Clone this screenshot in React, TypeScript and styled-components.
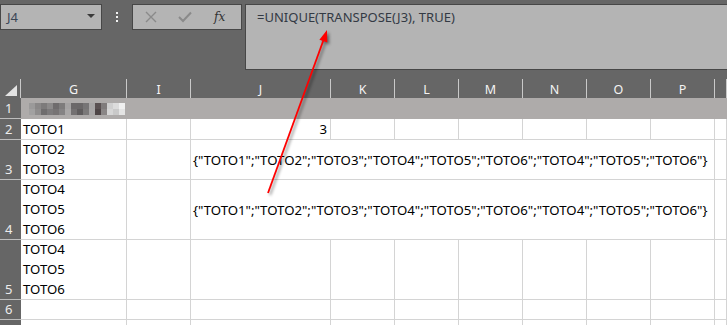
import React from "react";
import styled, { createGlobalStyle } from "styled-components";

const GlobalStyle = createGlobalStyle`
  html, body { margin: 0; padding: 0; background: #ffffff; overflow: hidden; }
  * { box-sizing: border-box; }
`;

const Window = styled.div`
  position: relative;
  width: 727px;
  height: 325px;
  overflow: hidden;
  background: #666666;
  font-family: "Noto Sans", "Open Sans", Arial, sans-serif;
`;

const TopBar = styled.div`
  display: flex;
  align-items: flex-start;
  height: 79px;
  padding-top: 4px;
`;

const NameBox = styled.div`
  width: 102px;
  height: 26px;
  background: #b4b4b4;
  border: 1px solid #474747;
  display: flex;
  align-items: center;
  justify-content: space-between;
  padding: 0 6px 0 6px;
  font-size: 13px;
  color: #3a4656;
`;

const DropArrow = styled.span`
  width: 0;
  height: 0;
  border-left: 4px solid transparent;
  border-right: 4px solid transparent;
  border-top: 4px solid #3a3a3a;
  margin-top: -2px;
`;

const Grip = styled.div`
  width: 30px;
  height: 26px;
  display: flex;
  flex-direction: column;
  align-items: center;
  justify-content: center;
  gap: 2px;
`;

const GripDot = styled.span`
  width: 2px;
  height: 2px;
  background: #f2f2f2;
`;

const FxBox = styled.div`
  width: 110px;
  height: 26px;
  background: #b4b4b4;
  border: 1px solid #474747;
  display: flex;
  align-items: center;
  padding-left: 12px;
  gap: 21px;
`;

const FxLabel = styled.span`
  font-family: "DejaVu Serif", "Liberation Serif", serif;
  font-style: italic;
  font-size: 12px;
  color: #333333;
  margin-left: 1px;
`;

const FormulaBar = styled.div`
  flex: 1;
  margin-left: 3px;
  margin-right: -6px;
  height: 66px;
  background: #b4b4b4;
  border: 1px solid #474747;
  padding: 3px 0 0 11px;
  font-size: 13px;
  color: #333a44;
`;

const Sheet = styled.div`
  display: grid;
  grid-template-columns: 21px 106px 64px 140px 64px 64px 64px 64px 64px 64px 1fr;
  grid-template-rows: 19px 21px 21px 40px 60px 60px 20px 20px;
  font-size: 13.2px;
`;

const ColHead = styled.div`
  background: #666666;
  border-right: 1px solid #c9c9c9;
  color: #f4f4f4;
  font-size: 12.5px;
  display: flex;
  align-items: center;
  justify-content: center;
  padding-top: 1px;
`;

const Corner = styled.div`
  background: #666666;
  border-right: 1px solid #c9c9c9;
  display: flex;
  align-items: flex-end;
  justify-content: flex-end;
  padding: 0 3px 2px 0;
`;

const CornerTriangle = styled.span`
  width: 0;
  height: 0;
  border-left: 12px solid transparent;
  border-bottom: 11px solid #e3e3e3;
`;

const RowHead = styled.div`
  background: #666666;
  border-bottom: 1px solid #bdbdbd;
  color: #ededed;
  font-size: 13px;
  display: flex;
  align-items: flex-end;
  padding: 0 0 1px 5px;
  line-height: 18px;
`;

const BandCell = styled.div`
  background: #aeabaa;
  display: flex;
  align-items: center;
  padding-left: 8px;
`;

const Cell = styled.div<{ $span?: number; $align?: "left" | "right"; $valign?: "end" | "center" }>`
  background: #ffffff;
  border-right: 1px solid #d4d4d4;
  border-bottom: 1px solid #d4d4d4;
  grid-column: span ${(p) => p.$span ?? 1};
  display: flex;
  flex-direction: column;
  justify-content: ${(p) => (p.$valign === "center" ? "center" : "flex-end")};
  align-items: ${(p) => (p.$align === "right" ? "flex-end" : "flex-start")};
  padding: 0 3px 0 2px;
  color: #000000;
  white-space: nowrap;
  overflow: hidden;
`;

const Line = styled.div`
  line-height: 20px;
  height: 20px;
`;

const ArrowLayer = styled.svg`
  position: absolute;
  left: 0;
  top: 0;
  pointer-events: none;
  filter: drop-shadow(2px 2px 1.5px rgba(0, 0, 0, 0.45));
`;

const columns = ["G", "I", "J", "K", "L", "M", "N", "O", "P", ""];

const arrayText =
  '{"TOTO1";"TOTO2";"TOTO3";"TOTO4";"TOTO5";"TOTO6";"TOTO4";"TOTO5";"TOTO6"}';

const blurBlocks: string[][] = [
  ["#9b9a9a", "#8a8888", "#7d7b7b", "#8c8a8a", "#6f6c6d", "#7e7c7c", "#a5a3a3", "#6b6869", "#6a6768", "#777576", "#a6a4a4", "#5a5152", "#807c7c", "#cfcfcf", "#dcdcdc", "#f0f0f0"],
  ["#a2a1a1", "#8f8d8d", "#6f6d6e", "#7c7a7b", "#767374", "#858384", "#a9a7a7", "#737071", "#5f5c5d", "#7b7979", "#a8a6a6", "#4e4546", "#8a8686", "#d6d6d6", "#c9c9c9", "#e4e4e4"],
];

const Blur: React.FC = () => (
  <svg width="96" height="12" viewBox="0 0 96 12">
    {blurBlocks.map((row, r) =>
      row.map((c, i) => <rect key={`${r}-${i}`} x={i * 6} y={r * 6} width="6" height="6" fill={c} />)
    )}
  </svg>
);

const EmptyCells: React.FC<{ from: number; to: number }> = ({ from, to }) => (
  <>
    {columns.slice(from, to).map((c, i) => (
      <Cell key={i} />
    ))}
  </>
);

export default function App() {
  return (
    <>
      <GlobalStyle />
      <Window>
        <TopBar>
          <NameBox>
            <span>J4</span>
            <DropArrow />
          </NameBox>
          <Grip>
            <GripDot />
            <GripDot />
            <GripDot />
          </Grip>
          <FxBox>
            <svg width="12" height="12" viewBox="0 0 12 12">
              <path d="M1 1 L11 11 M11 1 L1 11" stroke="#8a8a8a" strokeWidth="1.4" fill="none" />
            </svg>
            <svg width="14" height="12" viewBox="0 0 14 12">
              <path d="M1 6 L5 10 L13 1.5" stroke="#8a8a8a" strokeWidth="2" fill="none" />
            </svg>
            <FxLabel>fx</FxLabel>
          </FxBox>
          <FormulaBar>=UNIQUE(TRANSPOSE(J3), TRUE)</FormulaBar>
        </TopBar>

        <Sheet>
          <Corner>
            <CornerTriangle />
          </Corner>
          {columns.map((c, i) => (
            <ColHead key={i}>{c}</ColHead>
          ))}

          <RowHead>1</RowHead>
          <BandCell>
            <Blur />
          </BandCell>
          {columns.slice(1).map((_, i) => (
            <BandCell key={i} />
          ))}

          <RowHead>2</RowHead>
          <Cell>
            <Line>TOTO1</Line>
          </Cell>
          <Cell />
          <Cell $align="right">
            <Line>3</Line>
          </Cell>
          <EmptyCells from={3} to={10} />

          <RowHead>3</RowHead>
          <Cell>
            <Line>TOTO2</Line>
            <Line>TOTO3</Line>
          </Cell>
          <Cell />
          <Cell $span={7} $valign="center">
            <Line>{arrayText}</Line>
          </Cell>
          <Cell />

          <RowHead>4</RowHead>
          <Cell>
            <Line>TOTO4</Line>
            <Line>TOTO5</Line>
            <Line>TOTO6</Line>
          </Cell>
          <Cell />
          <Cell $span={7} $valign="center">
            <Line>{arrayText}</Line>
          </Cell>
          <Cell />

          <RowHead>5</RowHead>
          <Cell>
            <Line>TOTO4</Line>
            <Line>TOTO5</Line>
            <Line>TOTO6</Line>
          </Cell>
          <EmptyCells from={1} to={10} />

          <RowHead>6</RowHead>
          <EmptyCells from={0} to={10} />

          <RowHead />
          <EmptyCells from={0} to={10} />
        </Sheet>

        <ArrowLayer width="727" height="325" viewBox="0 0 727 325">
          <line x1="268" y1="193" x2="323.5" y2="40" stroke="#ff0000" strokeWidth="1.8" />
          <polygon points="327,30 327.3,42.5 319.4,39.7" fill="#ff0000" />
        </ArrowLayer>
      </Window>
    </>
  );
}
